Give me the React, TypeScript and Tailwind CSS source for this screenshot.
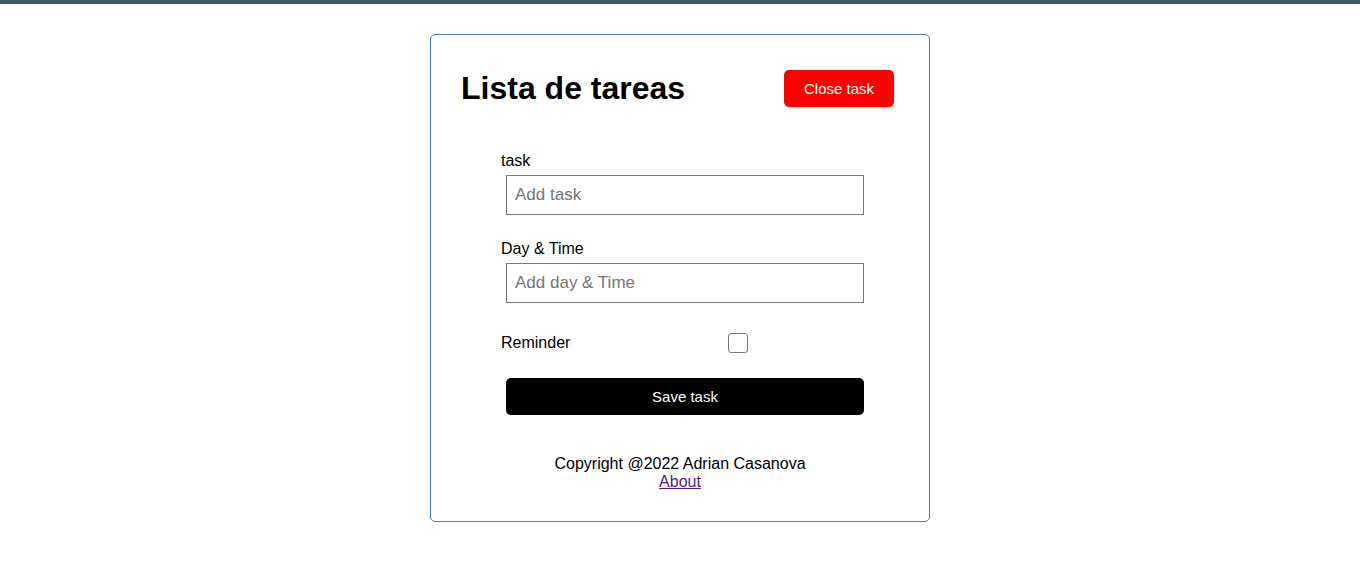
export default function App() {
  return (
    <div className="min-h-[577px] bg-white" style={{ fontFamily: '"Liberation Sans", Arial, sans-serif' }}>
      <div className="h-[4px] bg-[#455a64]" />
      <div className="mx-auto mt-[30px] w-[500px] h-[488px] rounded-[5px] border border-[#4682b4] pt-[35px]">
        <div className="flex h-[37px] items-center justify-between pl-[30px] pr-[35px]">
          <h1 className="text-[32px] font-bold leading-[37px] text-black">Lista de tareas</h1>
          <button className="h-[37px] w-[110px] rounded-[5px] bg-[#ff0000] pt-[2px] text-[15px] text-white">Close task</button>
        </div>
        <form className="mt-[44px] pl-[70px]">
          <label className="block pt-[1px] text-[16px] leading-[18px] text-black">task</label>
          <input
            type="text"
            placeholder="Add task"
            className="mt-[5px] ml-[5px] block h-[40px] w-[358px] border border-[#767676] px-[8px] text-[17px] placeholder:text-[#757575] outline-none"
          />
          <label className="mt-[24px] block pt-[1px] text-[16px] leading-[18px] text-black">Day &amp; Time</label>
          <input
            type="text"
            placeholder="Add day & Time"
            className="mt-[5px] ml-[5px] block h-[40px] w-[358px] border border-[#767676] px-[8px] text-[17px] placeholder:text-[#757575] outline-none"
          />
          <div className="mt-[30px] flex items-start">
            <label className="w-[227px] pt-[1px] text-[16px] leading-[18px] text-black">Reminder</label>
            <input type="checkbox" className="h-[20px] w-[20px] appearance-none rounded-[3px] border border-[#767676] bg-white" />
          </div>
          <button
            type="button"
            className="mt-[25px] ml-[5px] block h-[37px] w-[358px] rounded-[5px] bg-black pt-[2px] text-[15px] text-white"
          >
            Save task
          </button>
        </form>
        <footer className="mt-[39px] pt-[1px] text-center text-[16px] leading-[18px] text-black">
          <p>Copyright @2022 Adrian Casanova</p>
          <a href="#" className="text-[#551a8b] underline">About</a>
        </footer>
      </div>
    </div>
  );
}
